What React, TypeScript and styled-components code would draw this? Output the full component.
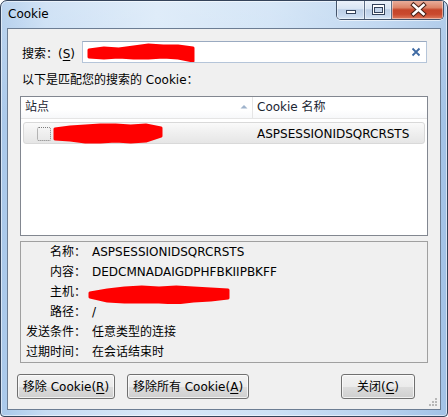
import React from "react";
import styled, { createGlobalStyle } from "styled-components";

const Global = createGlobalStyle`
  html, body { margin: 0; padding: 0; background: #ffffff; overflow: hidden; }
  #root { width: 448px; height: 417px; }
`;

const UI_FONT = `"DejaVu Sans", "Noto Sans CJK SC", sans-serif`;

const Frame = styled.div`
  box-sizing: border-box;
  width: 448px;
  height: 417px;
  display: flex;
  flex-direction: column;
  border: 1px solid #34435a;
  border-radius: 7px 7px 4px 4px;
  background:
    linear-gradient(to bottom, rgba(255,255,255,0.2) 0%, rgba(255,255,255,0) 30%),
    linear-gradient(to right, #a9c8ea 0%, #c6dcf3 10%, #d8e8f8 35%, #cde1f5 60%, #b6d1ee 85%, #a2c2e6 100%);
  box-shadow: inset 0 0 0 1px rgba(255, 255, 255, 0.55);
  font-family: ${UI_FONT};
  font-size: 12px;
  color: #000;
  overflow: hidden;
`;

const TitleBar = styled.div`
  height: 27px;
  flex: none;
  display: flex;
  align-items: flex-start;
  justify-content: space-between;
  padding: 0 3px 0 7px;
`;

const Title = styled.div`
  padding-top: 5px;
  line-height: 16px;
  font-size: 12px;
  color: #000;
`;

const CaptionGroup = styled.div`
  display: flex;
  margin-top: -1px;
  height: 20px;
  box-sizing: border-box;
  border: 1px solid #44546b;
  border-top: none;
  border-radius: 0 0 5px 5px;
  overflow: hidden;
  box-shadow: 0 1px 0 rgba(255,255,255,0.6);
`;

const CaptionButton = styled.div<{ $w: number; $close?: boolean; $first?: boolean }>`
  width: ${(p) => p.$w}px;
  height: 19px;
  display: flex;
  align-items: center;
  justify-content: center;
  border-left: ${(p) => (p.$first ? "none" : "1px solid #5d6e86")};
  background: ${(p) =>
    p.$close
      ? "linear-gradient(to bottom, #eab3a2 0%, #dc8468 40%, #c5452a 52%, #c9492e 75%, #dd7a5d 100%)"
      : "linear-gradient(to bottom, #edf3fa 0%, #d9e5f3 45%, #bccfe6 52%, #c6d8ee 80%, #d6e5f5 100%)"};
  box-shadow: inset 0 0 0 1px rgba(255,255,255,0.45);
`;

const Client = styled.div`
  flex: 1;
  margin: 0 6px 6px 6px;
  border: 1px solid #6c7d93;
  background: #f0f0f0;
  padding: 12px 12px 0 12px;
  display: flex;
  flex-direction: column;
  position: relative;
`;

const SearchRow = styled.div`
  display: flex;
  align-items: center;
  height: 22px;
`;

const FieldLabel = styled.div`
  width: 62px;
  padding-left: 2px;
  box-sizing: border-box;
  white-space: nowrap;
`;

const U = styled.span`
  text-decoration: underline;
  text-underline-offset: 2px;
`;

const SearchBox = styled.div`
  flex: 1;
  margin-right: 1px;
  height: 22px;
  box-sizing: border-box;
  background: #fff;
  border: 1px solid #b5c5d9;
  border-top-color: #9aaac0;
  display: flex;
  align-items: center;
  justify-content: space-between;
  padding: 0 5px 0 4px;
`;

const MatchLabel = styled.div`
  margin-top: 9px;
  padding-left: 2px;
  line-height: 16px;
`;

const Tree = styled.div`
  margin-top: 8px;
  height: 140px;
  box-sizing: border-box;
  border: 1px solid #828790;
  background: #fff;
`;

const TreeHeader = styled.div`
  display: grid;
  grid-template-columns: 232px 1fr;
  height: 22px;
  box-sizing: border-box;
  border-bottom: 1px solid #e5e5e5;
  background: linear-gradient(to bottom, #ffffff 0%, #ffffff 60%, #f7f8fa 100%);
`;

const HeaderCell = styled.div<{ $sep?: boolean }>`
  display: flex;
  align-items: center;
  padding-left: 4px;
  border-right: ${(p) => (p.$sep ? "1px solid #e5e5e5" : "none")};
  color: #1b2533;
  line-height: 21px;
`;

const SortArrow = styled.svg`
  margin-left: auto;
  margin-right: 4px;
  margin-top: -3px;
`;

const TreeRow = styled.div`
  margin: 3px 2px 0 2px;
  height: 22px;
  box-sizing: border-box;
  border: 1px solid #d9d9d9;
  border-radius: 3px;
  background: linear-gradient(to bottom, #fafafa 0%, #efefef 50%, #e6e6e6 100%);
  display: grid;
  grid-template-columns: 230px 1fr;
  align-items: center;
`;

const SiteCell = styled.div`
  display: flex;
  align-items: center;
  padding-left: 13px;
  gap: 2px;
`;

const FocusBox = styled.div`
  width: 14px;
  height: 14px;
  box-sizing: border-box;
  border: 1px dotted #7a7a7a;
  border-radius: 2px;
`;

const NameCell = styled.div`
  padding-left: 3px;
  white-space: nowrap;
`;

const Details = styled.div`
  margin-top: 5px;
  height: 122px;
  box-sizing: border-box;
  border: 1px solid #a0a0a0;
  display: grid;
  grid-template-columns: 65px 1fr;
  grid-auto-rows: 20px;
  column-gap: 6px;
  align-content: start;
`;

const DLabel = styled.div`
  text-align: right;
  line-height: 20px;
  white-space: nowrap;
`;

const DValue = styled.div`
  line-height: 20px;
  white-space: nowrap;
  display: flex;
  align-items: center;
`;

const ButtonRow = styled.div`
  margin: 11px 0 0 -3px;
  display: flex;
  gap: 12px;
`;

const Button = styled.button<{ $w: number; $right?: boolean }>`
  width: ${(p) => p.$w}px;
  height: 25px;
  box-sizing: border-box;
  margin-left: ${(p) => (p.$right ? "auto" : "0")};
  margin-right: ${(p) => (p.$right ? "13px" : "0")};
  padding: 0;
  border: 1px solid #707070;
  border-radius: 3px;
  background: linear-gradient(to bottom, #f2f2f2 0%, #ebebeb 50%, #dddddd 51%, #cfcfcf 100%);
  box-shadow: inset 0 0 0 1px rgba(255, 255, 255, 0.7);
  font-family: ${UI_FONT};
  font-size: 12px;
  color: #000;
  line-height: 22px;
  white-space: nowrap;
`;

const Grip = styled.svg`
  position: absolute;
  right: 2px;
  bottom: 2px;
`;

function scribble(w: number, h: number, top: number[], bottom: number[]) {
  const n = top.length;
  const step = w / (n - 1);
  let d = `M${0},${top[0]}`;
  for (let i = 1; i < n; i++) d += ` L${(i * step).toFixed(1)},${top[i]}`;
  for (let i = n - 1; i >= 0; i--) d += ` L${(i * step).toFixed(1)},${bottom[i]}`;
  d += " Z";
  return (
    <svg width={w + 4} height={h + 4} viewBox={`-2 -2 ${w + 4} ${h + 4}`} style={{ display: "block", flex: "none" }}>
      <path d={d} fill="#ff0000" stroke="#ff0000" strokeWidth={3} strokeLinejoin="round" />
    </svg>
  );
}

const ScribbleWrap = styled.div<{ $ml: number; $mt: number }>`
  margin-left: ${(p) => p.$ml}px;
  margin-top: ${(p) => p.$mt}px;
  display: flex;
`;

export default function App() {
  return (
    <>
      <Global />
      <Frame>
        <TitleBar>
          <Title>Cookie</Title>
          <CaptionGroup>
            <CaptionButton $w={27} $first>
              <svg width="27" height="19">
                <rect x="9.5" y="10.5" width="9" height="3" fill="#fff" stroke="#33425a" />
              </svg>
            </CaptionButton>
            <CaptionButton $w={26}>
              <svg width="25" height="19">
                <rect x="6.5" y="4.5" width="12" height="10" fill="#fff" stroke="#33425a" />
                <rect x="8.5" y="7.5" width="8" height="5" fill="#c3d4ea" stroke="#33425a" />
              </svg>
            </CaptionButton>
            <CaptionButton $w={51} $close>
              <svg width="50" height="19">
                <path d="M20.5 5 L30.5 14 M30.5 5 L20.5 14" stroke="#4a2218" strokeWidth="4.6" strokeLinecap="square" />
                <path d="M20.5 5 L30.5 14 M30.5 5 L20.5 14" stroke="#ffffff" strokeWidth="2.6" strokeLinecap="square" />
              </svg>
            </CaptionButton>
          </CaptionGroup>
        </TitleBar>
        <Client>
          <SearchRow>
            <FieldLabel>
              搜索：(<U>S</U>)
            </FieldLabel>
            <SearchBox>
              {scribble(104, 15, [5, 3, 4, 2, 0, 1, 1, 3], [12, 13, 12, 13, 13, 12, 13, 16])}
              <svg width="10" height="10" viewBox="0 0 10 10">
                <path d="M1.5 1.5 L8.5 8.5 M8.5 1.5 L1.5 8.5" stroke="#3f6aa3" strokeWidth="1.8" />
              </svg>
            </SearchBox>
          </SearchRow>
          <MatchLabel>以下是匹配您的搜索的 Cookie：</MatchLabel>
          <Tree>
            <TreeHeader>
              <HeaderCell $sep>
                站点
                <SortArrow width="8" height="5" viewBox="0 0 8 5">
                  <path d="M0.5 4.5 L4 1 L7.5 4.5 Z" fill="#9fb3cc" />
                </SortArrow>
              </HeaderCell>
              <HeaderCell>Cookie 名称</HeaderCell>
            </TreeHeader>
            <TreeRow>
              <SiteCell>
                <FocusBox />
                {scribble(106, 17, [4, 2, 1, 0, 0, 1, 0, 3], [14, 15, 17, 17, 16, 17, 16, 11])}
              </SiteCell>
              <NameCell>ASPSESSIONIDSQRCRSTS</NameCell>
            </TreeRow>
          </Tree>
          <Details>
            <DLabel>名称：</DLabel>
            <DValue>ASPSESSIONIDSQRCRSTS</DValue>
            <DLabel>内容：</DLabel>
            <DValue>DEDCMNADAIGDPHFBKIIPBKFF</DValue>
            <DLabel>主机：</DLabel>
            <DValue>
              <ScribbleWrap $ml={-4} $mt={4}>
                {scribble(138, 15, [6, 3, 1, 0, 1, 0, 1, 2, 3], [10, 14, 15, 15, 15, 16, 14, 13, 11])}
              </ScribbleWrap>
            </DValue>
            <DLabel>路径：</DLabel>
            <DValue>/</DValue>
            <DLabel>发送条件：</DLabel>
            <DValue>任意类型的连接</DValue>
            <DLabel>过期时间：</DLabel>
            <DValue>在会话结束时</DValue>
          </Details>
          <ButtonRow>
            <Button $w={98}>
              移除 Cookie(<U>R</U>)
            </Button>
            <Button $w={122}>
              移除所有 Cookie(<U>A</U>)
            </Button>
            <Button $w={74} $right>
              关闭(<U>C</U>)
            </Button>
          </ButtonRow>
          <Grip width="9" height="9" viewBox="0 0 9 9">
            <rect x="6" y="0" width="2" height="2" fill="#b8b8b8" />
            <rect x="3" y="3" width="2" height="2" fill="#b8b8b8" />
            <rect x="6" y="3" width="2" height="2" fill="#b8b8b8" />
            <rect x="0" y="6" width="2" height="2" fill="#b8b8b8" />
            <rect x="3" y="6" width="2" height="2" fill="#b8b8b8" />
            <rect x="6" y="6" width="2" height="2" fill="#b8b8b8" />
          </Grip>
        </Client>
      </Frame>
    </>
  );
}
